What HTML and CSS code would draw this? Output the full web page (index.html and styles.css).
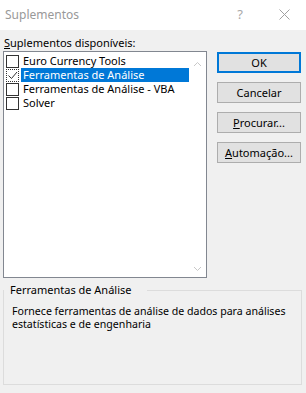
FILE: index.html
```html
<!DOCTYPE html>
<html lang="pt-br">
<head>
    <meta charset="UTF-8">
    <meta name="viewport" content="width=device-width, initial-scale=1.0">
    <title>Suplementos</title>
    <link rel="stylesheet" href="styles.css">
</head>
<body>
    <div class="titlebar">
        <span class="title">Suplementos</span>
        <span class="help">?</span>
        <svg class="close" width="11" height="11" viewBox="0 0 11 11">
            <path d="M0.5 0.5 L10.5 10.5 M10.5 0.5 L0.5 10.5" stroke="#a0a0a0" stroke-width="1"/>
        </svg>
    </div>

    <div class="dialog">
        <div class="main">
            <div class="left">
                <div class="list-label"><u>S</u>uplementos disponíveis:</div>
                <div class="listbox">
                    <div class="items">
                        <div class="item">
                            <span class="check"></span>
                            <span class="text">Euro Currency Tools</span>
                        </div>
                        <div class="item selected">
                            <span class="check checked focus">
                                <svg width="11" height="11" viewBox="0 0 11 11">
                                    <path d="M1.5 5.5 L4.5 8.5 L10 2" fill="none" stroke="#333" stroke-width="1"/>
                                </svg>
                            </span>
                            <span class="text">Ferramentas de Análise</span>
                        </div>
                        <div class="item">
                            <span class="check"></span>
                            <span class="text">Ferramentas de Análise - VBA</span>
                        </div>
                        <div class="item">
                            <span class="check"></span>
                            <span class="text">Solver</span>
                        </div>
                    </div>
                    <div class="scrollbar">
                        <svg width="9" height="6" viewBox="0 0 9 6">
                            <path d="M1 5 L4.5 1.5 L8 5" fill="none" stroke="#c8c8c8" stroke-width="1"/>
                        </svg>
                        <svg width="9" height="6" viewBox="0 0 9 6">
                            <path d="M1 1 L4.5 4.5 L8 1" fill="none" stroke="#c8c8c8" stroke-width="1"/>
                        </svg>
                    </div>
                </div>
            </div>

            <div class="buttons">
                <button class="btn btn-default">OK</button>
                <button class="btn">Cancelar</button>
                <button class="btn"><u>P</u>rocurar...</button>
                <button class="btn"><u>A</u>utomação...</button>
            </div>
        </div>

        <fieldset class="group">
            <legend>Ferramentas de Análise</legend>
            <p class="desc">Fornece ferramentas de análise de dados para análises<br>estatísticas e de engenharia</p>
        </fieldset>
    </div>
</body>
</html>
```

FILE: styles.css
```css
* {
    box-sizing: border-box;
    margin: 0;
    padding: 0;
}

body {
    font-family: 'Noto Sans', 'Open Sans', sans-serif;
    font-size: 11px;
    background-color: #f0f0f0;
    color: #000;
    width: 306px;
    height: 393px;
    overflow: hidden;
}

.titlebar {
    height: 30px;
    background-color: #fff;
    display: flex;
    align-items: center;
    padding: 0 16px 2px 5px;
}

.title {
    color: #999;
    font-size: 12px;
    flex: 1;
}

.help {
    color: #a8a8a8;
    font-size: 13px;
    margin-right: 36px;
}

.dialog {
    padding: 6px 4px 0 3px;
}

.main {
    display: flex;
    gap: 10px;
}

.left {
    width: 204px;
}

.list-label {
    line-height: 14px;
    height: 15px;
    padding-left: 1px;
}

.listbox {
    height: 227px;
    background-color: #fff;
    border: 1px solid #828790;
    display: flex;
    padding: 2px 0 0 2px;
}

.items {
    flex: 1;
}

.item {
    display: flex;
    align-items: center;
    height: 14px;
}

.check {
    width: 13px;
    height: 13px;
    border: 1px solid #333;
    background-color: #fff;
    margin-right: 2px;
    display: flex;
    align-items: center;
    justify-content: center;
}

.check.focus {
    outline: 1px dotted #333;
    outline-offset: -1px;
    border-color: transparent;
}

.text {
    flex: 1;
    height: 14px;
    line-height: 14px;
    padding-left: 2px;
    white-space: nowrap;
}

.item.selected .text {
    background-color: #0078d7;
    color: #fff;
}

.scrollbar {
    width: 17px;
    display: flex;
    flex-direction: column;
    justify-content: space-between;
    align-items: center;
    padding: 7px 0 5px;
}

.buttons {
    display: flex;
    flex-direction: column;
    gap: 9px;
    padding-top: 16px;
}

.btn {
    width: 84px;
    height: 21px;
    font-family: inherit;
    font-size: 11px;
    color: #000;
    background-color: #e1e1e1;
    border: 1px solid #adadad;
}

.btn-default {
    border: 2px solid #0078d7;
}

.group {
    margin-top: 5px;
    height: 102px;
    min-width: 0;
    border: 1px solid #dcdcdc;
    padding: 0 0 0 8px;
}

.group legend {
    padding: 0 16px 0 6px;
    margin-left: -8px;
    line-height: 14px;
}

.desc {
    font-size: 10.6px;
    line-height: 13px;
    padding-top: 8px;
}
```
